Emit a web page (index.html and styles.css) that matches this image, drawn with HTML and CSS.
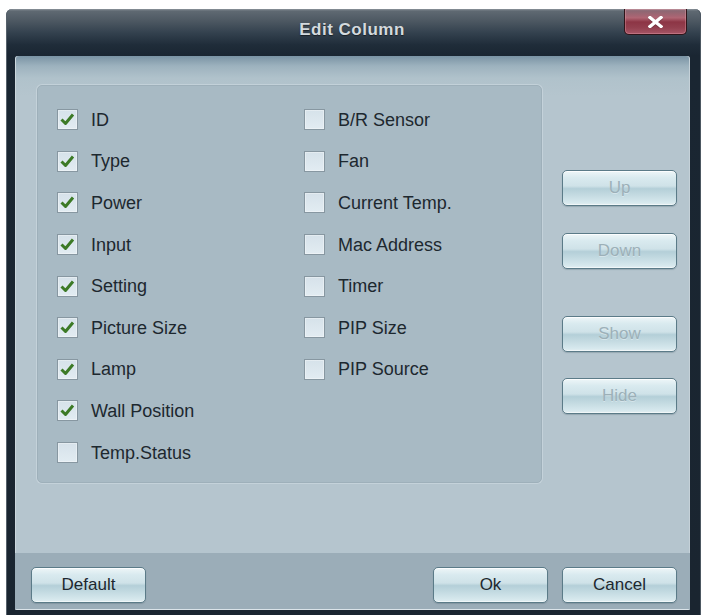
FILE: index.html
```html
<!DOCTYPE html>
<html>
<head>
<meta charset="utf-8">
<title>Edit Column</title>
<link rel="stylesheet" href="styles.css">
</head>
<body>
<div class="window">
  <div class="titlebar">
    <span class="tb-left"></span>
    <div class="title">Edit Column</div>
    <button class="close" aria-label="Close">
      <svg width="15" height="12" viewBox="0 0 15 12"><path d="M2 1.5 L13 10.5 M13 1.5 L2 10.5" stroke="#3a1a20" stroke-width="4" stroke-linecap="square" opacity=".35" transform="translate(0,0.6)"/><path d="M2 1.5 L13 10.5 M13 1.5 L2 10.5" stroke="#ffffff" stroke-width="3.4" stroke-linecap="square"/></svg>
    </button>
  </div>
  <div class="client">
    <div class="main">
      <div class="panel">
        <div class="col col-left">
          <label class="row"><span class="box checked"><svg width="19" height="19" viewBox="0 0 19 19"><path d="M3.5 9.5 L7.5 13.5 L15 4.5" fill="none" stroke="#3c7a26" stroke-width="3" stroke-linejoin="round"/></svg></span><span class="lbl">ID</span></label>
          <label class="row"><span class="box checked"><svg width="19" height="19" viewBox="0 0 19 19"><path d="M3.5 9.5 L7.5 13.5 L15 4.5" fill="none" stroke="#3c7a26" stroke-width="3" stroke-linejoin="round"/></svg></span><span class="lbl">Type</span></label>
          <label class="row"><span class="box checked"><svg width="19" height="19" viewBox="0 0 19 19"><path d="M3.5 9.5 L7.5 13.5 L15 4.5" fill="none" stroke="#3c7a26" stroke-width="3" stroke-linejoin="round"/></svg></span><span class="lbl">Power</span></label>
          <label class="row"><span class="box checked"><svg width="19" height="19" viewBox="0 0 19 19"><path d="M3.5 9.5 L7.5 13.5 L15 4.5" fill="none" stroke="#3c7a26" stroke-width="3" stroke-linejoin="round"/></svg></span><span class="lbl">Input</span></label>
          <label class="row"><span class="box checked"><svg width="19" height="19" viewBox="0 0 19 19"><path d="M3.5 9.5 L7.5 13.5 L15 4.5" fill="none" stroke="#3c7a26" stroke-width="3" stroke-linejoin="round"/></svg></span><span class="lbl">Setting</span></label>
          <label class="row"><span class="box checked"><svg width="19" height="19" viewBox="0 0 19 19"><path d="M3.5 9.5 L7.5 13.5 L15 4.5" fill="none" stroke="#3c7a26" stroke-width="3" stroke-linejoin="round"/></svg></span><span class="lbl">Picture Size</span></label>
          <label class="row"><span class="box checked"><svg width="19" height="19" viewBox="0 0 19 19"><path d="M3.5 9.5 L7.5 13.5 L15 4.5" fill="none" stroke="#3c7a26" stroke-width="3" stroke-linejoin="round"/></svg></span><span class="lbl">Lamp</span></label>
          <label class="row"><span class="box checked"><svg width="19" height="19" viewBox="0 0 19 19"><path d="M3.5 9.5 L7.5 13.5 L15 4.5" fill="none" stroke="#3c7a26" stroke-width="3" stroke-linejoin="round"/></svg></span><span class="lbl">Wall Position</span></label>
          <label class="row"><span class="box"></span><span class="lbl">Temp.Status</span></label>
        </div>
        <div class="col col-right">
          <label class="row"><span class="box"></span><span class="lbl">B/R Sensor</span></label>
          <label class="row"><span class="box"></span><span class="lbl">Fan</span></label>
          <label class="row"><span class="box"></span><span class="lbl">Current Temp.</span></label>
          <label class="row"><span class="box"></span><span class="lbl">Mac Address</span></label>
          <label class="row"><span class="box"></span><span class="lbl">Timer</span></label>
          <label class="row"><span class="box"></span><span class="lbl">PIP Size</span></label>
          <label class="row"><span class="box"></span><span class="lbl">PIP Source</span></label>
        </div>
      </div>
      <div class="side">
        <button class="btn disabled btn-up">Up</button>
        <button class="btn disabled btn-down">Down</button>
        <button class="btn disabled btn-show">Show</button>
        <button class="btn disabled btn-hide">Hide</button>
      </div>
    </div>
    <div class="footer">
      <button class="btn btn-default">Default</button>
      <span class="spacer"></span>
      <button class="btn btn-ok">Ok</button>
      <button class="btn btn-cancel">Cancel</button>
    </div>
  </div>
</div>
</body>
</html>
```

FILE: styles.css
```css
html, body {
  margin: 0;
  padding: 0;
  background: #ffffff;
}

body {
  font-family: "Liberation Sans", Arial, sans-serif;
}

.window {
  box-sizing: border-box;
  margin: 9px 0 0 6px;
  width: 695px;
  height: 606px;
  border-radius: 6px 6px 0 0;
  background: linear-gradient(to bottom,
    #8d959c 0px, #5f6972 2px, #4d5862 12px, #33414e 24px,
    #1f2c39 36px, #1a2632 47px, #1a2530 100%);
  box-shadow: inset 1px 0 0 #56616b, inset -1px 0 0 #4c5761;
  display: flex;
  flex-direction: column;
}

.titlebar {
  height: 47px;
  box-sizing: border-box;
  padding: 0 14px 0 11px;
  display: grid;
  grid-template-columns: 1fr auto 1fr;
  align-items: start;
}

.title {
  margin-top: 11px;
  font-size: 17px;
  line-height: 20px;
  font-weight: bold;
  letter-spacing: 0.5px;
  color: #d4dade;
  text-shadow: 0 1px 1px rgba(0,0,0,.5);
  white-space: nowrap;
}

.close {
  justify-self: end;
  width: 63px;
  height: 26px;
  padding: 0;
  margin: 0;
  border: 1px solid #2f1419;
  border-top: none;
  border-radius: 0 0 5px 5px;
  background: linear-gradient(to bottom,
    #c58591 0%, #b0667474 0%, #b06674 35%, #8d3545 52%, #93404f 75%, #a75666 100%);
  box-shadow: inset 0 0 0 1px rgba(240,170,180,.35);
  display: flex;
  align-items: center;
  justify-content: center;
}

.close svg {
  display: block;
  margin-top: 1px;
}

.client {
  margin: 0 11px 0 9px;
  height: 554px;
  border-radius: 3px 3px 2px 2px;
  overflow: hidden;
  background: linear-gradient(to bottom,
    #7a93a4 0px, #9db2be 10px, #b0c2cb 22px, #b5c5ce 40px, #b5c5ce 100%);
  box-shadow: inset 1px 0 0 #cbd6dc, inset -1px 0 0 #c5d1d8;
  display: flex;
  flex-direction: column;
}

.main {
  height: 497px;
  box-sizing: border-box;
  padding: 29px 0 0 22px;
  display: flex;
  align-items: flex-start;
}

.panel {
  box-sizing: border-box;
  width: 505px;
  height: 398px;
  padding: 13px 0 0 19px;
  background: #a8bac4;
  border: 1px solid #9eb0ba;
  border-radius: 5px;
  box-shadow: 0 0 0 1px rgba(214,226,232,.45);
  display: flex;
}

.col {
  display: flex;
  flex-direction: column;
}

.col-left {
  width: 247px;
}

.row {
  height: 41.6px;
  display: flex;
  align-items: center;
  gap: 13px;
}

.box {
  box-sizing: border-box;
  width: 21px;
  height: 21px;
  flex: none;
  border: 1px solid #8797a1;
  background: linear-gradient(to bottom, #d6e2ea, #e2ecf2);
  box-shadow: inset 0 0 0 1px rgba(255,255,255,.35);
}

.box svg {
  display: block;
}

.lbl {
  font-size: 18px;
  line-height: 20px;
  color: #1d282f;
  white-space: nowrap;
}

.side {
  margin-left: 20px;
  padding-top: 85px;
  display: flex;
  flex-direction: column;
}

.btn {
  box-sizing: border-box;
  width: 115px;
  height: 36px;
  padding: 0;
  margin: 0;
  font-family: "Liberation Sans", Arial, sans-serif;
  font-size: 17px;
  color: #1d282f;
  border: 1px solid #5b7b88;
  border-radius: 5px;
  background: linear-gradient(to bottom,
    #eef6f8 0%, #d9eaef 20%, #cfe2e8 44%, #b4cfd8 52%, #c3dae1 70%, #d6e8ed 92%, #e3eff2 100%);
  box-shadow: inset 0 1px 0 rgba(255,255,255,.8), inset 0 -1px 0 rgba(255,255,255,.5), 0 1px 1px rgba(60,80,90,.25);
}

.btn.disabled {
  color: #9cb0b8;
  text-shadow: 0 1px 0 rgba(255,255,255,.35);
}

.btn-down {
  margin-top: 27px;
}

.btn-show {
  margin-top: 47px;
}

.btn-hide {
  margin-top: 26px;
}

.footer {
  height: 57px;
  box-sizing: border-box;
  padding: 14px 13px 0 16px;
  background: #9badb8;
  border-bottom: 1px solid #dbe4e9;
  display: flex;
  align-items: flex-start;
}

.spacer {
  flex: 1;
}

.btn-cancel {
  margin-left: 14px;
}
```
